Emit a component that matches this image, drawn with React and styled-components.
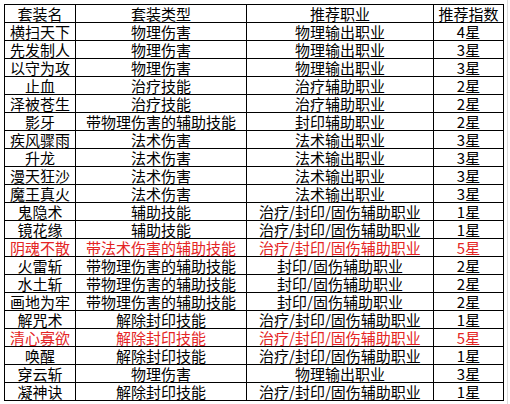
import styled, { createGlobalStyle } from 'styled-components';

const GlobalStyle = createGlobalStyle`
  html, body {
    margin: 0;
    padding: 0;
    background: #ffffff;
  }
  body {
    font-family: "Noto Sans CJK SC", "Liberation Sans", sans-serif;
  }
`;

const Sheet = styled.div`
  width: 510px;
  height: 404px;
  box-sizing: border-box;
  padding: 4px 0 0 4px;
  background-image:
    linear-gradient(to right, transparent 507px, #dcdcdc 507px, #dcdcdc 508px, transparent 508px);
`;

const Table = styled.table`
  border-collapse: collapse;
  table-layout: fixed;
  width: 499px;
`;

const Col = styled.col`
  width: ${(p) => p.$w}px;
`;

const Cell = styled.td`
  border: 1px solid #000;
  height: 17px;
  padding: 0;
  font-size: 15px;
  line-height: 17px;
  text-align: center;
  vertical-align: bottom;
  white-space: nowrap;
  color: ${(p) => (p.$red ? '#e42424' : '#000')};
`;

const rows = [
  ['横扫天下', '物理伤害', '物理输出职业', '4星'],
  ['先发制人', '物理伤害', '物理输出职业', '3星'],
  ['以守为攻', '物理伤害', '物理输出职业', '3星'],
  ['止血', '治疗技能', '治疗辅助职业', '2星'],
  ['泽被苍生', '治疗技能', '治疗辅助职业', '2星'],
  ['影牙', '带物理伤害的辅助技能', '封印辅助职业', '2星'],
  ['疾风骤雨', '法术伤害', '法术输出职业', '3星'],
  ['升龙', '法术伤害', '法术输出职业', '3星'],
  ['漫天狂沙', '法术伤害', '法术输出职业', '3星'],
  ['魔王真火', '法术伤害', '法术输出职业', '3星'],
  ['鬼隐术', '辅助技能', '治疗/封印/固伤辅助职业', '1星'],
  ['镜花缘', '辅助技能', '治疗/封印/固伤辅助职业', '1星'],
  ['阴魂不散', '带法术伤害的辅助技能', '治疗/封印/固伤辅助职业', '5星', true],
  ['火雷斩', '带物理伤害的辅助技能', '封印/固伤辅助职业', '2星'],
  ['水土斩', '带物理伤害的辅助技能', '封印/固伤辅助职业', '2星'],
  ['画地为牢', '带物理伤害的辅助技能', '封印/固伤辅助职业', '2星'],
  ['解咒术', '解除封印技能', '治疗/封印/固伤辅助职业', '1星'],
  ['清心寡欲', '解除封印技能', '治疗/封印/固伤辅助职业', '5星', true],
  ['唤醒', '解除封印技能', '治疗/封印/固伤辅助职业', '1星'],
  ['穿云斩', '物理伤害', '物理输出职业', '3星'],
  ['凝神诀', '解除封印技能', '治疗/封印/固伤辅助职业', '1星'],
];

const header = ['套装名', '套装类型', '推荐职业', '推荐指数'];

export default function App() {
  return (
    <>
      <GlobalStyle />
      <Sheet>
        <Table>
          <colgroup>
            <Col $w={71} />
            <Col $w={171} />
            <Col $w={187} />
            <Col $w={70} />
          </colgroup>
          <tbody>
            <tr>
              {header.map((h) => (
                <Cell key={h}>{h}</Cell>
              ))}
            </tr>
            {rows.map(([name, type, job, stars, red]) => (
              <tr key={name}>
                <Cell $red={red}>{name}</Cell>
                <Cell $red={red}>{type}</Cell>
                <Cell $red={red}>{job}</Cell>
                <Cell $red={red}>{stars}</Cell>
              </tr>
            ))}
          </tbody>
        </Table>
      </Sheet>
    </>
  );
}
